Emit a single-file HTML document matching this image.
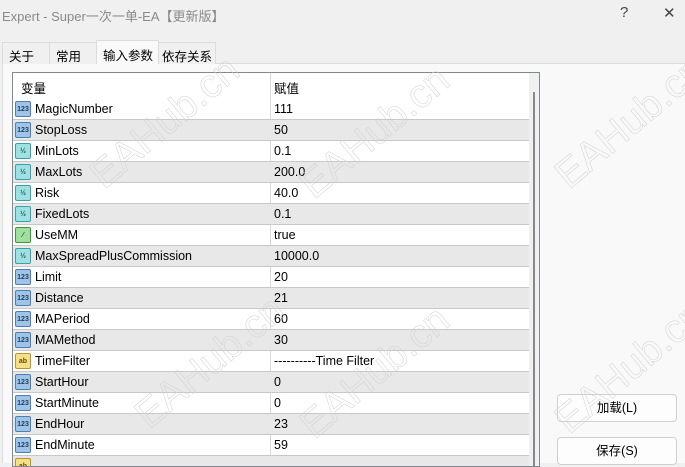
<!DOCTYPE html>
<html><head><meta charset="utf-8"><style>
*{margin:0;padding:0;box-sizing:border-box}
body{width:685px;height:461px;background:#f0f0f0;font-family:"Liberation Sans","Noto Sans CJK SC",sans-serif;font-size:12.5px;color:#000;position:relative;overflow:hidden}
.title{position:absolute;left:2px;top:6px;color:#8a8a8a;font-size:13px}
.tb{position:absolute;top:4px;color:#444;font-size:15px}
.tab{position:absolute;top:42px;height:22px;border:1px solid #dcdcdc;border-bottom:none;background:#f0f0f0;padding:3px 0 0 6px;font-size:12.5px;white-space:nowrap;overflow:hidden}
.panel{position:absolute;left:2px;top:63px;width:683px;height:400px;background:#f9f9f9;border-top:1px solid #dcdcdc;border-left:1px solid #dcdcdc}
.tbl{position:absolute;left:12px;top:72px;width:528px;height:395px;border:1px solid #828790;background:#fff;overflow:hidden}
.hdr{position:absolute;left:0;top:0;width:516px;height:26px;background:#fff}
.hdr span{position:absolute;top:5px}
.row{position:absolute;left:0;width:516px;height:21px;border-bottom:1px solid #c8c8c8}
.row.g{background:#e8e8e8}
.row .n{position:absolute;left:22px;top:3px}
.row .v{position:absolute;left:261px;top:3px}
.ic{position:absolute;left:2px;top:2px;width:16px;height:16px;border-radius:2px;font-size:7px;font-weight:bold;text-align:center;line-height:16px}
.i123{background:#9fc4e6;border:1px solid #4a7fb5;color:#1e3f66}
.ih{background:#9fe0e0;border:1px solid #3aa0b0;color:#1c5a66}
.ib{background:#9fe09f;border:1px solid #3a9a3a;color:#155515}
.ia{background:#f5e08a;border:1px solid #b9952a;color:#6a4a00}
.vl{position:absolute;left:257px;top:0;width:1px;height:400px;background:#d8d8d8}
.sb{position:absolute;left:516px;top:0;width:11px;height:400px;background:#f0f0f0}
.sb div{position:absolute;left:4px;top:19px;width:2px;height:380px;background:#888}
.btn{position:absolute;left:557px;width:120px;height:28px;border:1px solid #d0d0d0;border-radius:4px;background:#fdfdfd;text-align:center;line-height:26px;font-size:12.5px}
.wm{position:absolute;color:transparent;-webkit-text-stroke:0.5px #d0d0d0;font-size:40px;transform:rotate(-40deg);font-family:"Liberation Sans",sans-serif}
</style></head><body>
<div class="title">Expert - Super一次一单-EA【更新版】</div>
<div class="tb" style="left:620px">?</div>
<div class="tb" style="left:663px">✕</div>
<div class="panel"></div>
<div class="tab" style="left:2px;width:48px">关于</div>
<div class="tab" style="left:49px;width:48px">常用</div>
<div class="tab" style="left:96px;width:63px;top:40px;height:24px;background:#f9f9f9;padding-top:4px;padding-left:6px">输入参数</div>
<div class="tab" style="left:158px;width:58px;padding-left:3px">依存关系</div>
<div class="tbl">
<div class="hdr"><span style="left:8px">变量</span><span style="left:261px">赋值</span></div>
<div class="vl"></div>
<div class="row" style="top:26px"><div class="ic i123">123</div><span class="n">MagicNumber</span><span class="v">111</span></div>
<div class="row g" style="top:47px"><div class="ic i123">123</div><span class="n">StopLoss</span><span class="v">50</span></div>
<div class="row" style="top:68px"><div class="ic ih">½</div><span class="n">MinLots</span><span class="v">0.1</span></div>
<div class="row g" style="top:89px"><div class="ic ih">½</div><span class="n">MaxLots</span><span class="v">200.0</span></div>
<div class="row" style="top:110px"><div class="ic ih">½</div><span class="n">Risk</span><span class="v">40.0</span></div>
<div class="row g" style="top:131px"><div class="ic ih">½</div><span class="n">FixedLots</span><span class="v">0.1</span></div>
<div class="row" style="top:152px"><div class="ic ib">⁄</div><span class="n">UseMM</span><span class="v">true</span></div>
<div class="row g" style="top:173px"><div class="ic ih">½</div><span class="n">MaxSpreadPlusCommission</span><span class="v">10000.0</span></div>
<div class="row" style="top:194px"><div class="ic i123">123</div><span class="n">Limit</span><span class="v">20</span></div>
<div class="row g" style="top:215px"><div class="ic i123">123</div><span class="n">Distance</span><span class="v">21</span></div>
<div class="row" style="top:236px"><div class="ic i123">123</div><span class="n">MAPeriod</span><span class="v">60</span></div>
<div class="row g" style="top:257px"><div class="ic i123">123</div><span class="n">MAMethod</span><span class="v">30</span></div>
<div class="row" style="top:278px"><div class="ic ia">ab</div><span class="n">TimeFilter</span><span class="v">----------Time Filter</span></div>
<div class="row g" style="top:299px"><div class="ic i123">123</div><span class="n">StartHour</span><span class="v">0</span></div>
<div class="row" style="top:320px"><div class="ic i123">123</div><span class="n">StartMinute</span><span class="v">0</span></div>
<div class="row g" style="top:341px"><div class="ic i123">123</div><span class="n">EndHour</span><span class="v">23</span></div>
<div class="row" style="top:362px"><div class="ic i123">123</div><span class="n">EndMinute</span><span class="v">59</span></div>
<div class="row g" style="top:383px"><div class="ic ia">ab</div></div>
<div class="sb"><div></div></div>
</div>
<div class="btn" style="top:394px">加载(L)</div>
<div class="btn" style="top:437px">保存(S)</div>
<div class="wm" style="left:75px;top:100px">EAHub.cn</div>
<div class="wm" style="left:285px;top:110px">EAHub.cn</div>
<div class="wm" style="left:540px;top:100px">EAHub.cn</div>
<div class="wm" style="left:120px;top:340px">EAHub.cn</div>
<div class="wm" style="left:285px;top:350px">EAHub.cn</div>
<div class="wm" style="left:540px;top:345px">EAHub.cn</div>
</body></html>
